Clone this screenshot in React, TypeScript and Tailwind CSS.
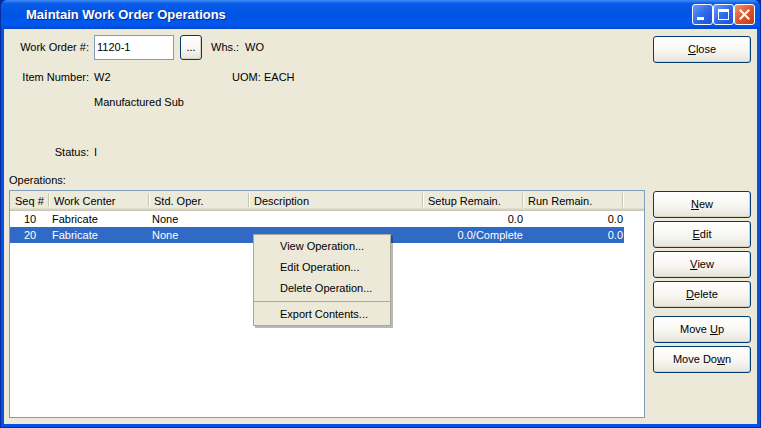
import type { ReactNode } from "react"

type Col = { label: string; w: number; align?: "center" | "right" }

const cols: Col[] = [
  { label: "Seq #", w: 40, align: "center" },
  { label: "Work Center", w: 100 },
  { label: "Std. Oper.", w: 100 },
  { label: "Description", w: 174 },
  { label: "Setup Remain.", w: 100, align: "right" },
  { label: "Run Remain.", w: 100, align: "right" },
]

const rows = [
  { cells: ["10", "Fabricate", "None", "", "0.0", "0.0"], selected: false },
  { cells: ["20", "Fabricate", "None", "", "0.0/Complete", "0.0"], selected: true },
]

function XpButton({ children, className = "" }: { children: ReactNode; className?: string }) {
  return (
    <div
      className={
        "flex items-center justify-center rounded-[3px] border border-[#003C74] bg-[linear-gradient(180deg,#FFFFFF_0%,#F7F6F1_55%,#E6E4DA_100%)] text-[11px] text-black shadow-[inset_-1px_-1px_0_#D8D2C4] " +
        className
      }
    >
      {children}
    </div>
  )
}

function TitleBar() {
  return (
    <div className="flex h-[29px] items-center bg-[linear-gradient(180deg,#3F8CF3_0%,#0A5DEA_12%,#0054E3_45%,#0058EE_85%,#0046CF_100%)] pl-[25px] pr-[5px]">
      <div className="flex-1 text-[13px] font-bold text-white [text-shadow:1px_1px_0_#0A2A8A]">
        Maintain Work Order Operations
      </div>
      <div className="flex">
        <div className="flex h-[21px] w-[21px] items-end rounded-[3px] border border-white bg-[linear-gradient(135deg,#6B9BF6_0%,#2F6BEB_50%,#1A4FD8_100%)] pb-[4px] pl-[4px]">
          <div className="h-[3px] w-[7px] bg-white" />
        </div>
        <div className="flex h-[21px] w-[21px] items-center justify-center rounded-[3px] border border-white bg-[linear-gradient(135deg,#6B9BF6_0%,#2F6BEB_50%,#1A4FD8_100%)]">
          <div className="h-[11px] w-[11px] border border-t-[3px] border-white" />
        </div>
        <div className="flex h-[21px] w-[21px] items-center justify-center rounded-[3px] border border-white bg-[linear-gradient(135deg,#F0946E_0%,#E0532F_50%,#C23A18_100%)]">
          <svg width="11" height="11" viewBox="0 0 11 11">
            <path d="M1.5 1.5 L9.5 9.5 M9.5 1.5 L1.5 9.5" stroke="white" strokeWidth="2" strokeLinecap="square" />
          </svg>
        </div>
      </div>
    </div>
  )
}

function LeftPane() {
  return (
    <div className="flex w-[641px] flex-col pl-[5px]">
      <div className="mt-[6px] flex h-[25px] items-center">
        <div className="w-[80px] text-right">Work Order #:</div>
        <div className="ml-[5px] flex h-[25px] w-[80px] items-center border border-[#7F9DB9] bg-white pl-[2px]">1120-1</div>
        <XpButton className="ml-[6px] h-[25px] w-[22px]">...</XpButton>
        <div className="ml-[9px] w-[34px]">Whs.:</div>
        <div>WO</div>
      </div>
      <div className="mt-[9px] flex h-[16px] items-center">
        <div className="w-[80px] text-right">Item Number:</div>
        <div className="ml-[5px] w-[138px]">W2</div>
        <div className="w-[32px]">UOM:</div>
        <div>EACH</div>
      </div>
      <div className="mt-[9px] flex h-[16px] items-center pl-[85px]">Manufactured Sub</div>
      <div className="mt-[34px] flex h-[16px] items-center">
        <div className="w-[80px] text-right">Status:</div>
        <div className="ml-[5px]">I</div>
      </div>
      <div className="mt-[12px] flex h-[16px] items-center">Operations:</div>
      <div className="mt-[2px] flex h-[228px] w-[636px] flex-col border border-[#7F9DB9] bg-white">
        <div className="flex h-[20px] bg-[#EBEADB] shadow-[inset_0_-1px_0_#CBC7B8,inset_0_-2px_0_#D6D2C2,inset_0_-3px_0_#E2DECD]">
          {cols.map((c, i) => (
            <div key={c.label} className="flex h-[20px] items-center" style={{ width: c.w }}>
              <div className={i === 0 ? "flex-1 pl-[5px]" : "flex-1 pl-[4px]"}>{c.label}</div>
              <div className="mb-[2px] h-[14px] w-[2px] border-l border-r border-l-[#C7C5B2] border-r-white" />
            </div>
          ))}
          <div className="flex-1" />
        </div>
        {rows.map((r, ri) => (
          <div key={ri} className={r.selected ? "flex h-[16px] w-[614px] bg-[#316AC5] text-white" : "flex h-[16px] w-[614px]"}>
            {r.cells.map((cell, ci) => {
              const c = cols[ci]
              const align =
                c.align === "center" ? "text-center" : c.align === "right" ? "text-right pr-[1px]" : "pl-[2px]"
              return (
                <div key={ci} className={"flex h-[16px] items-center " + (c.align === "right" ? "justify-end " : c.align === "center" ? "justify-center " : "") + align} style={{ width: c.w }}>
                  {cell}
                </div>
              )
            })}
          </div>
        ))}
      </div>
    </div>
  )
}

function RightPane() {
  return (
    <div className="ml-[8px] flex w-[98px] flex-col">
      <XpButton className="mt-[7px] h-[27px]">
        <span className="underline">C</span>lose
      </XpButton>
      <XpButton className="mt-[128px] h-[27px]">
        <span className="underline">N</span>ew
      </XpButton>
      <XpButton className="mt-[3px] h-[27px]">
        <span className="underline">E</span>dit
      </XpButton>
      <XpButton className="mt-[3px] h-[27px]">
        <span className="underline">V</span>iew
      </XpButton>
      <XpButton className="mt-[3px] h-[27px]">
        <span className="underline">D</span>elete
      </XpButton>
      <XpButton className="mt-[8px] h-[27px]">
        Move&nbsp;<span className="underline">U</span>p
      </XpButton>
      <XpButton className="mt-[3px] h-[27px]">
        Move Do<span className="underline">w</span>n
      </XpButton>
    </div>
  )
}

function ContextMenu() {
  const item = "flex h-[21px] items-center pl-[26px]"
  return (
    <div className="absolute left-[249px] top-[205px] w-[138px] border border-[#ACA899] bg-[#ECE9D8] pt-[1px] shadow-[2px_2px_0_rgba(0,0,0,0.28)]">
      <div className={item}>View Operation...</div>
      <div className={item}>Edit Operation...</div>
      <div className={item}>Delete Operation...</div>
      <div className="flex h-[5px] items-center">
        <div className="h-[1px] w-full bg-[#ACA899]" />
      </div>
      <div className={item}>Export Contents...</div>
    </div>
  )
}

export default function App() {
  return (
    <div className="h-[428px] w-[761px] bg-[#0A2B9E]">
      <div className="flex h-full w-full flex-col overflow-hidden rounded-t-[7px] border-x border-b border-[#0A2B9E] bg-[#0553E6] font-['Liberation_Sans',Arial,sans-serif] text-[11px] text-black">
        <TitleBar />
        <div className="relative mx-[3px] mb-[3px] flex flex-1 bg-[#ECE9D8]">
          <LeftPane />
          <RightPane />
          <ContextMenu />
        </div>
      </div>
    </div>
  )
}
